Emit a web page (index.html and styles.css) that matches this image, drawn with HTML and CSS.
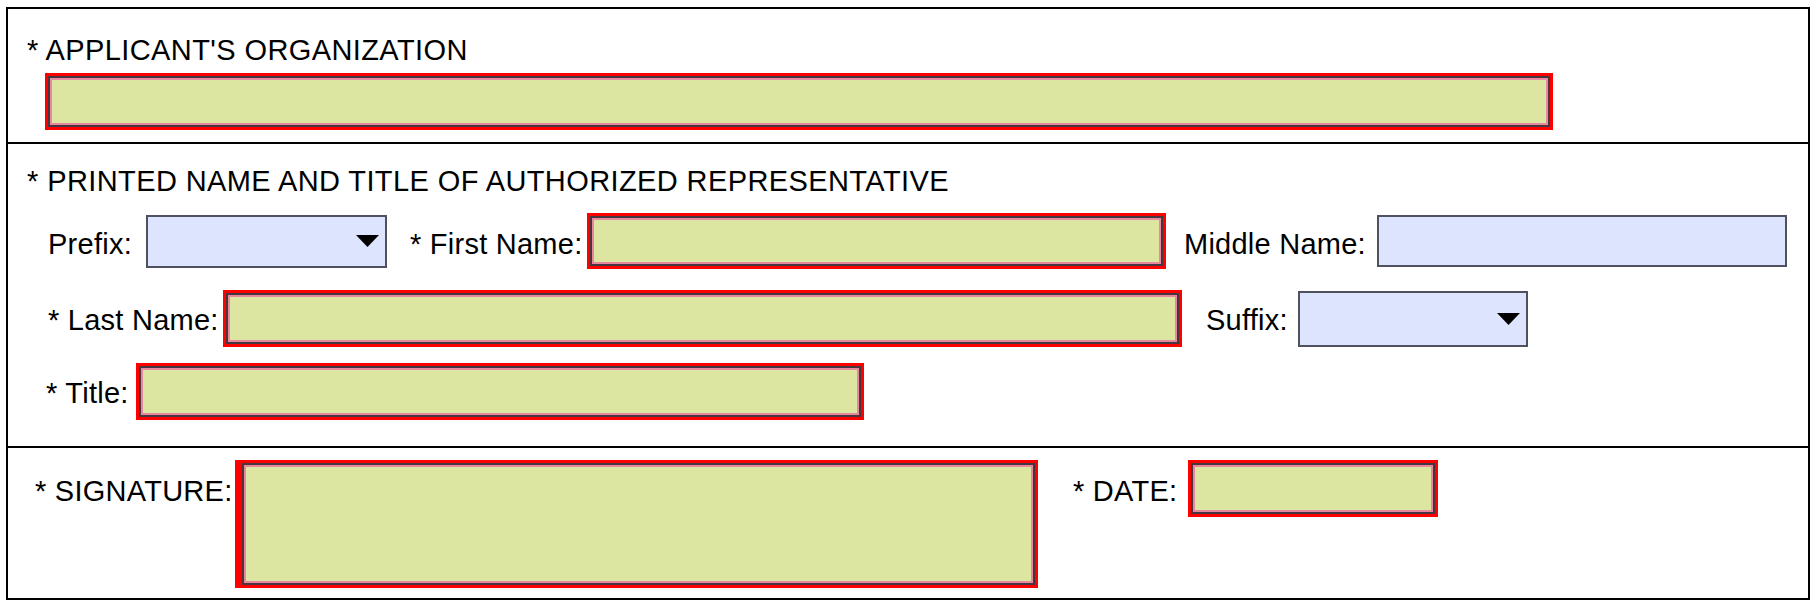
FILE: index.html
```html
<!DOCTYPE html>
<html lang="en">
<head>
    <meta charset="UTF-8">
    <meta name="viewport" content="width=device-width, initial-scale=1.0">
    <title>Authorized Representative</title>
    <link rel="stylesheet" href="styles.css">
</head>
<body>
    <form class="sheet">
        <div class="section section-org">
            <label class="label heading" for="org">* APPLICANT'S ORGANIZATION</label>
            <input type="text" id="org" class="field req org-field">
        </div>

        <div class="section section-name">
            <div class="label heading">* PRINTED NAME AND TITLE OF AUTHORIZED REPRESENTATIVE</div>

            <div class="row row-first">
                <label class="label prefix-label" for="prefix">Prefix:</label>
                <div class="field select prefix-field" id="prefix">
                    <svg width="23" height="12" viewBox="0 0 23 12"><polygon points="0,0 23,0 11.5,12" fill="#000"/></svg>
                </div>
                <label class="label first-label" for="firstName">* First Name:</label>
                <input type="text" id="firstName" class="field req first-field">
                <label class="label middle-label" for="middleName">Middle Name:</label>
                <input type="text" id="middleName" class="field opt middle-field">
            </div>

            <div class="row row-last">
                <label class="label last-label" for="lastName">* Last Name:</label>
                <input type="text" id="lastName" class="field req last-field">
                <label class="label suffix-label" for="suffix">Suffix:</label>
                <div class="field select suffix-field" id="suffix">
                    <svg width="23" height="12" viewBox="0 0 23 12"><polygon points="0,0 23,0 11.5,12" fill="#000"/></svg>
                </div>
            </div>

            <div class="row row-title">
                <label class="label title-label" for="title">* Title:</label>
                <input type="text" id="title" class="field req title-field">
            </div>
        </div>

        <div class="section section-sign">
            <label class="label sign-label" for="signature">* SIGNATURE:</label>
            <div class="field req sign-field" id="signature"></div>
            <label class="label date-label" for="date">* DATE:</label>
            <input type="text" id="date" class="field req date-field">
        </div>
    </form>
</body>
</html>
```

FILE: styles.css
```css
* {
    box-sizing: border-box;
}
body {
    margin: 0;
    padding: 0;
    background-color: #fff;
    font-family: "Liberation Sans", Arial, sans-serif;
    font-size: 29px;
    color: #000;
}
.sheet {
    width: 1804px;
    height: 593px;
    margin: 7px 0 0 6px;
    border: 2px solid #000;
}
.section {
    padding-left: 19px;
}
.section + .section {
    border-top: 2px solid #000;
}
.label {
    display: block;
    flex: none;
    line-height: 33px;
    letter-spacing: 0.25px;
    white-space: nowrap;
}
.heading {
    letter-spacing: 0.4px;
}

/* input boxes */
.field {
    display: block;
    flex: none;
    margin: 0;
    padding: 0;
    font: inherit;
    outline: none;
}
.req {
    background-color: #dce6a1;
    border: 3px solid #ff0000;
    box-shadow: inset 0 0 0 2px #46363f, inset 0 0 0 4px #e8879d;
}
.opt, .select {
    background-color: #dde4fe;
    border: 2px solid #50515f;
}
.select {
    display: flex;
    justify-content: flex-end;
    align-items: center;
    padding-right: 6px;
}

/* section 1 */
.section-org {
    height: 133px;
    padding-top: 25px;
}
.org-field {
    width: 1508px;
    height: 57px;
    margin-top: 6px;
    margin-left: 18px;
}

/* section 2 */
.section-name {
    height: 304px;
    padding-top: 21px;
}
.row {
    display: flex;
    align-items: center;
}
.row-first {
    height: 56px;
    margin-top: 15px;
}
.row-first .label {
    padding-top: 7px;
}
.row-last {
    height: 57px;
    margin-top: 21px;
}
.row-last .label,
.row-title .label {
    padding-top: 3px;
}
.row-title {
    height: 57px;
    margin-top: 16px;
}
.prefix-label { width: 98px; margin-left: 21px; }
.prefix-field { width: 241px; height: 53px; }
.first-label { width: 177px; margin-left: 23px; }
.first-field { width: 579px; height: 56px; }
.middle-label { width: 193px; margin-left: 18px; }
.middle-field { width: 410px; height: 52px; }
.last-label { width: 175px; margin-left: 21px; }
.last-field { width: 959px; height: 57px; }
.suffix-label { width: 92px; margin-left: 24px; }
.suffix-field { width: 230px; height: 56px; }
.title-label { width: 90px; margin-left: 19px; }
.title-field { width: 728px; height: 57px; }

/* section 3 */
.section-sign {
    display: flex;
    align-items: flex-start;
    height: 152px;
    padding-top: 12px;
}
.section-sign .label {
    margin-top: 15px;
}
.sign-label { width: 200px; margin-left: 8px; }
.sign-field {
    width: 803px;
    height: 128px;
    border-left-width: 7px;
}
.date-label { width: 115px; margin-left: 35px; }
.date-field { width: 250px; height: 57px; }
```
